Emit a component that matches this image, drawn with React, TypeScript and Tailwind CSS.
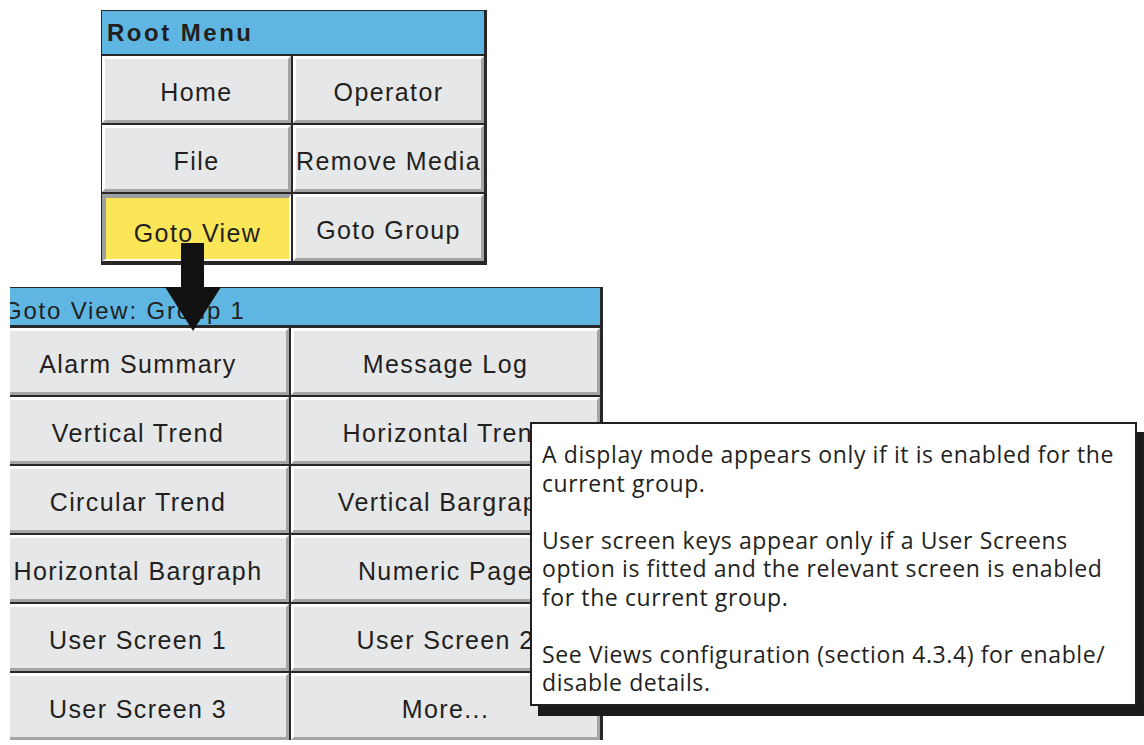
import React from "react";

const rootItems = ["Home", "Operator", "File", "Remove Media", "Goto View", "Goto Group"];

const viewItems = [
	"Alarm Summary",
	"Message Log",
	"Vertical Trend",
	"Horizontal Trend",
	"Circular Trend",
	"Vertical Bargraph",
	"Horizontal Bargraph",
	"Numeric Page",
	"User Screen 1",
	"User Screen 2",
	"User Screen 3",
	"More...",
];

const noteLines = [
	["A display mode appears only if it is enabled for the", "current group."],
	[
		"User screen keys appear only if a User Screens",
		"option is fitted and the relevant screen is enabled",
		"for the current group.",
	],
	["See Views configuration (section 4.3.4) for enable/", "disable details."],
];

function Key({ label, active }: { label: string; active?: boolean }) {
	return (
		<div
			className={
				active
					? "flex h-[67px] items-center justify-center border-t-[4px] border-l-[4px] border-b-2 border-r-2 border-t-[#9d9ea0] border-l-[#9d9ea0] border-b-white border-r-white bg-[#fbe657] pt-[10px] text-[25px] tracking-[1.4px] text-[#231f20]"
					: "flex h-[67px] items-center justify-center border-t-[3px] border-l-[3px] border-b-[3px] border-r-[3px] border-t-white border-l-white border-b-[#a3a4a6] border-r-[#a3a4a6] bg-[#e6e7e8] pt-[6px] text-[25px] tracking-[1.4px] text-[#231f20]"
			}
		>
			<span className="whitespace-nowrap">{label}</span>
		</div>
	);
}

export default function App() {
	return (
		<div
			className="relative h-[745px] w-[1144px] overflow-hidden bg-white pt-[10px]"
			style={{ fontFamily: '"Liberation Sans", Arial, sans-serif' }}
		>
			{/* Root menu */}
			<div className="ml-[101px] w-[386px] border-t border-l border-r-[3px] border-b-[4px] border-[#2a2728]">
				<div className="flex h-[45px] items-center border-b-2 border-[#2a2728] bg-[#5fb6e2] pl-[5px] pt-[1px] text-[24px] font-bold tracking-[2.5px] text-[#231f20]">
					Root Menu
				</div>
				<div className="grid grid-cols-[189px_191px] gap-[2px] bg-[#2a2728]">
					{rootItems.map((item) => (
						<Key key={item} label={item} active={item === "Goto View"} />
					))}
				</div>
			</div>

			{/* Goto View panel, cropped on the left */}
			<div className="ml-[10px] mt-[22px] w-[593px] overflow-hidden">
				<div className="-ml-[24px] w-[617px] border-t border-l border-r-[3px] border-[#2a2728]">
					<div className="flex h-[40px] items-center border-b-[3px] border-[#2a2728] bg-[#5fb6e2] pl-[16px] pt-[9px] text-[24px] tracking-[1.8px] text-[#231f20]">
						Goto View: Group 1
					</div>
					<div className="grid grid-cols-[302px_309px] gap-[2px] bg-[#2a2728]">
						{viewItems.map((item) => (
							<Key key={item} label={item} />
						))}
					</div>
				</div>
			</div>

			{/* Arrow */}
			<svg className="absolute left-0 top-0" width="240" height="340" viewBox="0 0 240 340">
				<rect x="181" y="243" width="23" height="46" fill="#111" />
				<polygon points="165,287 221,287 193,331" fill="#111" />
			</svg>

			{/* Note */}
			<div
				className="absolute left-[530px] top-[422px] h-[284px] w-[607px] border-2 border-[#231f20] bg-white pl-[10px] pt-[16px] text-[23px] leading-[28.5px] tracking-[0.6px] text-[#231f20] shadow-[8px_10px_0_#1c1a1b]"
				style={{ fontFamily: '"Open Sans", sans-serif' }}
			>
				{noteLines.map((para, i) => (
					<div key={i} className={i > 0 ? "mt-[28.5px]" : ""}>
						{para.map((line) => (
							<div key={line} className="whitespace-nowrap">
								{line}
							</div>
						))}
					</div>
				))}
			</div>
		</div>
	);
}
